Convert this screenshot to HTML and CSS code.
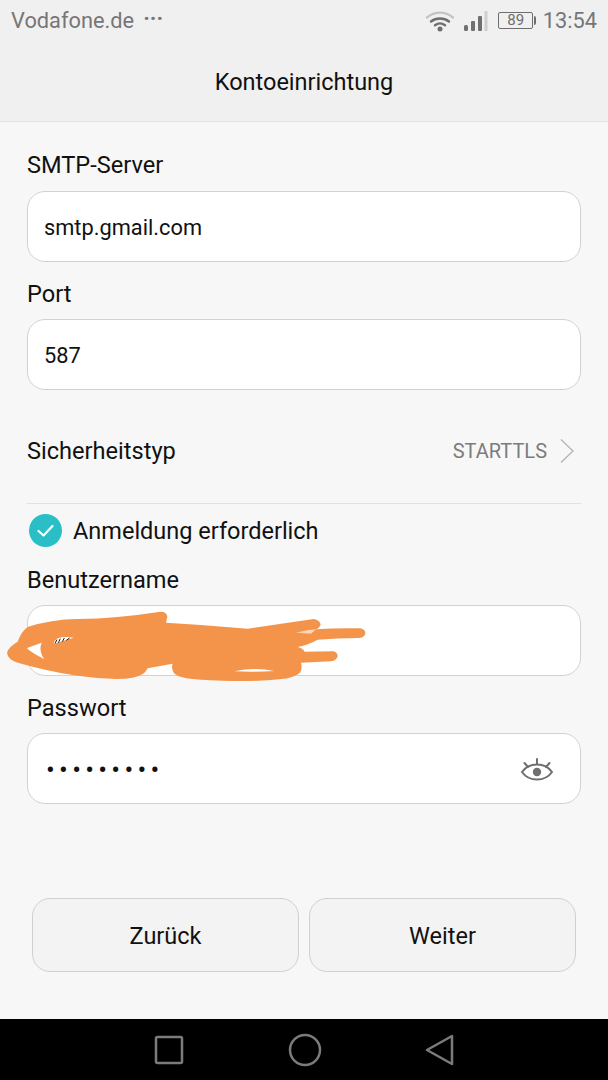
FILE: index.html
```html
<!DOCTYPE html>
<html lang="de">
<head>
  <meta charset="UTF-8">
  <meta name="viewport" content="width=device-width, initial-scale=1.0">
  <title>Kontoeinrichtung</title>
  <link rel="stylesheet" href="styles.css">
</head>
<body>
  <div class="screen">
    <header class="top">
      <div class="status-bar">
        <span class="carrier">Vodafone.de</span>
        <span class="more">&middot;&middot;&middot;</span>
        <div class="status-right">
          <svg class="wifi" width="30" height="22" viewBox="0 0 30 22" fill="none" stroke-linecap="round">
            <path d="M2 7.5C9.500 1 20.500 1 28 7.500" stroke="#c4c4c4" stroke-width="2.400"/>
            <path d="M6 11.500C11 7.500 19 7.500 24 11.500" stroke="#6e6e6e" stroke-width="2.400"/>
            <path d="M10 15.200C13 13 17 13 20 15.200" stroke="#6e6e6e" stroke-width="2.400"/>
            <circle cx="15" cy="19" r="2.500" fill="#6e6e6e"/>
          </svg>
          <svg class="signal" width="25" height="22" viewBox="0 0 25 22" fill="#707070">
            <rect x="1" y="15" width="4" height="6" rx="1.500"/>
            <rect x="8" y="11" width="4" height="10" rx="1"/>
            <rect x="15" y="6" width="4" height="15" rx="1"/>
            <rect x="21.500" y="1" width="3" height="20" fill="#cfcfcf"/>
          </svg>
          <div class="battery"><span class="battery-level">89</span></div>
          <span class="clock">13:54</span>
        </div>
      </div>
      <h1 class="title">Kontoeinrichtung</h1>
    </header>

    <main class="form">
      <div class="label label-first">SMTP-Server</div>
      <div class="field">smtp.gmail.com</div>

      <div class="label">Port</div>
      <div class="field">587</div>

      <div class="security-row">
        <span>Sicherheitstyp</span>
        <span class="security-value">
          STARTTLS
          <svg width="16" height="26" viewBox="0 0 16 26" fill="none" stroke="#b4b4b4" stroke-width="1.300">
            <path d="M2 1.500L14 13L2 24.500"/>
          </svg>
        </span>
      </div>

      <div class="check-row">
        <svg width="36" height="36" viewBox="0 0 36 36">
          <circle cx="18.500" cy="17.500" r="16.500" fill="#2abfc6"/>
          <path d="M11.500 18L16.500 22.500L25.500 13" fill="none" stroke="#fff" stroke-width="2.200" stroke-linecap="round" stroke-linejoin="round"/>
        </svg>
        <span>Anmeldung erforderlich</span>
      </div>

      <div class="label label-user">Benutzername</div>
      <div class="field field-user">
        <svg class="scribble" width="400" height="110" viewBox="0 0 1200 330">
          <path fill="#f4944a" fill-rule="evenodd" d="M18 185Q22 168 50 152Q62 120 80 108Q150 85 230 84Q350 82 478 62Q498 62 499 78L495 95Q620 102 740 113L938 84Q958 88 959 102Q955 112 945 115Q1010 110 1078 112Q1094 116 1093 128Q1090 140 1072 141Q1010 142 950 146Q925 160 890 168Q905 172 911 182L998 181Q1011 186 1010 196Q1006 210 990 211L900 215Q905 235 897 245Q880 260 835 265Q740 275 600 266Q530 262 518 245Q510 232 515 218L440 232Q430 255 395 260Q340 270 220 253Q130 238 50 215Q20 205 18 185ZM76 172L122 155Q112 180 130 205Q100 190 76 172ZM700 241Q760 228 820 240Q760 244 700 241ZM158 158L218 140Q190 135 170 142Q160 148 158 158Z"/>
          <path d="M162 157L168 146M172 155L178 143M184 152L190 141M196 148L206 141" stroke="#1a1a1a" stroke-width="3"/>
          <path d="M885 125L918 118L945 115L930 128Z" fill="#fff" opacity="0.600"/>
        </svg>
      </div>

      <div class="label">Passwort</div>
      <div class="field field-password">
        <span class="dots">&bull;&bull;&bull;&bull;&bull;&bull;&bull;&bull;&bull;</span>
        <svg width="34" height="26" viewBox="0 0 34 26" fill="none" stroke="#6f6f6f" stroke-width="2" stroke-linecap="round">
          <path d="M2 15C9 5 25 5 32 15C25 25 9 25 2 15Z"/>
          <circle cx="17" cy="15" r="4.200" fill="#6f6f6f" stroke="none"/>
          <path d="M17 2V7M4.500 6L8 10M29.500 6L26 10"/>
        </svg>
      </div>
    </main>

    <div class="actions">
      <button class="btn">Zurück</button>
      <button class="btn">Weiter</button>
    </div>

    <nav class="nav-bar">
      <svg width="30" height="30" viewBox="0 0 30 30" fill="none" stroke="#7b7b7b" stroke-width="2.500" stroke-linejoin="round">
        <rect x="2" y="2" width="26" height="26" rx="1.500"/>
      </svg>
      <svg width="34" height="34" viewBox="0 0 34 34" fill="none" stroke="#7b7b7b" stroke-width="2.500">
        <circle cx="17" cy="17" r="15"/>
      </svg>
      <svg width="30" height="32" viewBox="0 0 30 32" fill="none" stroke="#7b7b7b" stroke-width="2.500" stroke-linejoin="round">
        <path d="M2 16L27 2V30Z"/>
      </svg>
    </nav>
  </div>
</body>
</html>
```

FILE: styles.css
```css
body {
  margin: 0;
  font-family: Roboto, "Liberation Sans", sans-serif;
  color: #111;
  background-color: #f7f7f7;
}
.screen {
  height: 1080px;
  display: flex;
  flex-direction: column;
  overflow: hidden;
}
.top {
  height: 121px;
  background-color: #f0f0f0;
  border-bottom: 1px solid #e2e2e2;
  flex-shrink: 0;
}
.status-bar {
  height: 41px;
  display: flex;
  align-items: center;
  padding: 0 11px;
  color: #767676;
  font-size: 21.800px;
}
.more {
  margin-left: 9px;
  margin-top: -5px;
  font-size: 22px;
  font-weight: bold;
}
.status-right {
  margin-left: auto;
  display: flex;
  align-items: center;
}
.wifi { margin-right: 8px; }
.signal { margin-right: 10px; }
.battery {
  width: 33px;
  height: 15px;
  border: 1.500px solid #6e6e6e;
  border-radius: 2px;
  display: flex;
  align-items: center;
  justify-content: center;
  margin-right: 9.500px;
  position: relative;
}
.battery::after {
  content: "";
  position: absolute;
  right: -4px;
  top: 3px;
  width: 2px;
  height: 9px;
  background-color: #6e6e6e;
  border-radius: 0 2px 2px 0;
}
.battery-level {
  font-size: 15px;
  line-height: 1;
  color: #6e6e6e;
}
.clock { font-size: 21.800px; }
.title {
  margin: 0;
  height: 81px;
  display: flex;
  align-items: center;
  justify-content: center;
  font-size: 23.500px;
  font-weight: 400;
  color: #111;
}
.form {
  padding: 0 27px;
  flex: 1;
}
.label {
  font-size: 23.600px;
  height: 25px;
  line-height: 25px;
  margin-top: 20px;
  margin-bottom: 12px;
}
.label-first { margin-top: 31px; margin-bottom: 13px; }
.label-user { margin-top: 10px; }
.field {
  height: 67px;
  padding: 2px 16px 0;
  background-color: #fff;
  border: 1px solid #d2d2d2;
  border-radius: 18px;
  display: flex;
  align-items: center;
  font-size: 21.800px;
  position: relative;
}
.field-password { justify-content: space-between; padding-right: 26px; }
.dots {
  font-size: 26px;
  letter-spacing: 4.300px;
  margin-left: 2px;
}
.scribble {
  position: absolute;
  left: -27px;
  top: -15px;
}
.security-row {
  height: 105px;
  padding-top: 8px;
  display: flex;
  align-items: center;
  justify-content: space-between;
  font-size: 23.600px;
  border-bottom: 1px solid #e2e2e2;
}
.security-value {
  display: flex;
  align-items: center;
  gap: 12px;
  font-size: 20px;
  color: #7c7c7c;
  margin-right: 6px;
}
.check-row {
  display: flex;
  align-items: center;
  gap: 10px;
  height: 54px;
  font-size: 23.500px;
}
.actions {
  display: flex;
  gap: 10px;
  padding: 0 32px;
  margin-bottom: 47px;
}
.btn {
  flex: 1;
  height: 74px;
  padding-top: 3px;
  background-color: #f3f3f3;
  border: 1px solid #d0d0d0;
  border-radius: 18px;
  font-family: inherit;
  font-size: 23.500px;
  color: #111;
}
.nav-bar {
  height: 61px;
  flex-shrink: 0;
  background-color: #000;
  display: flex;
  align-items: center;
  gap: 103.500px;
  padding-left: 154px;
}
```
